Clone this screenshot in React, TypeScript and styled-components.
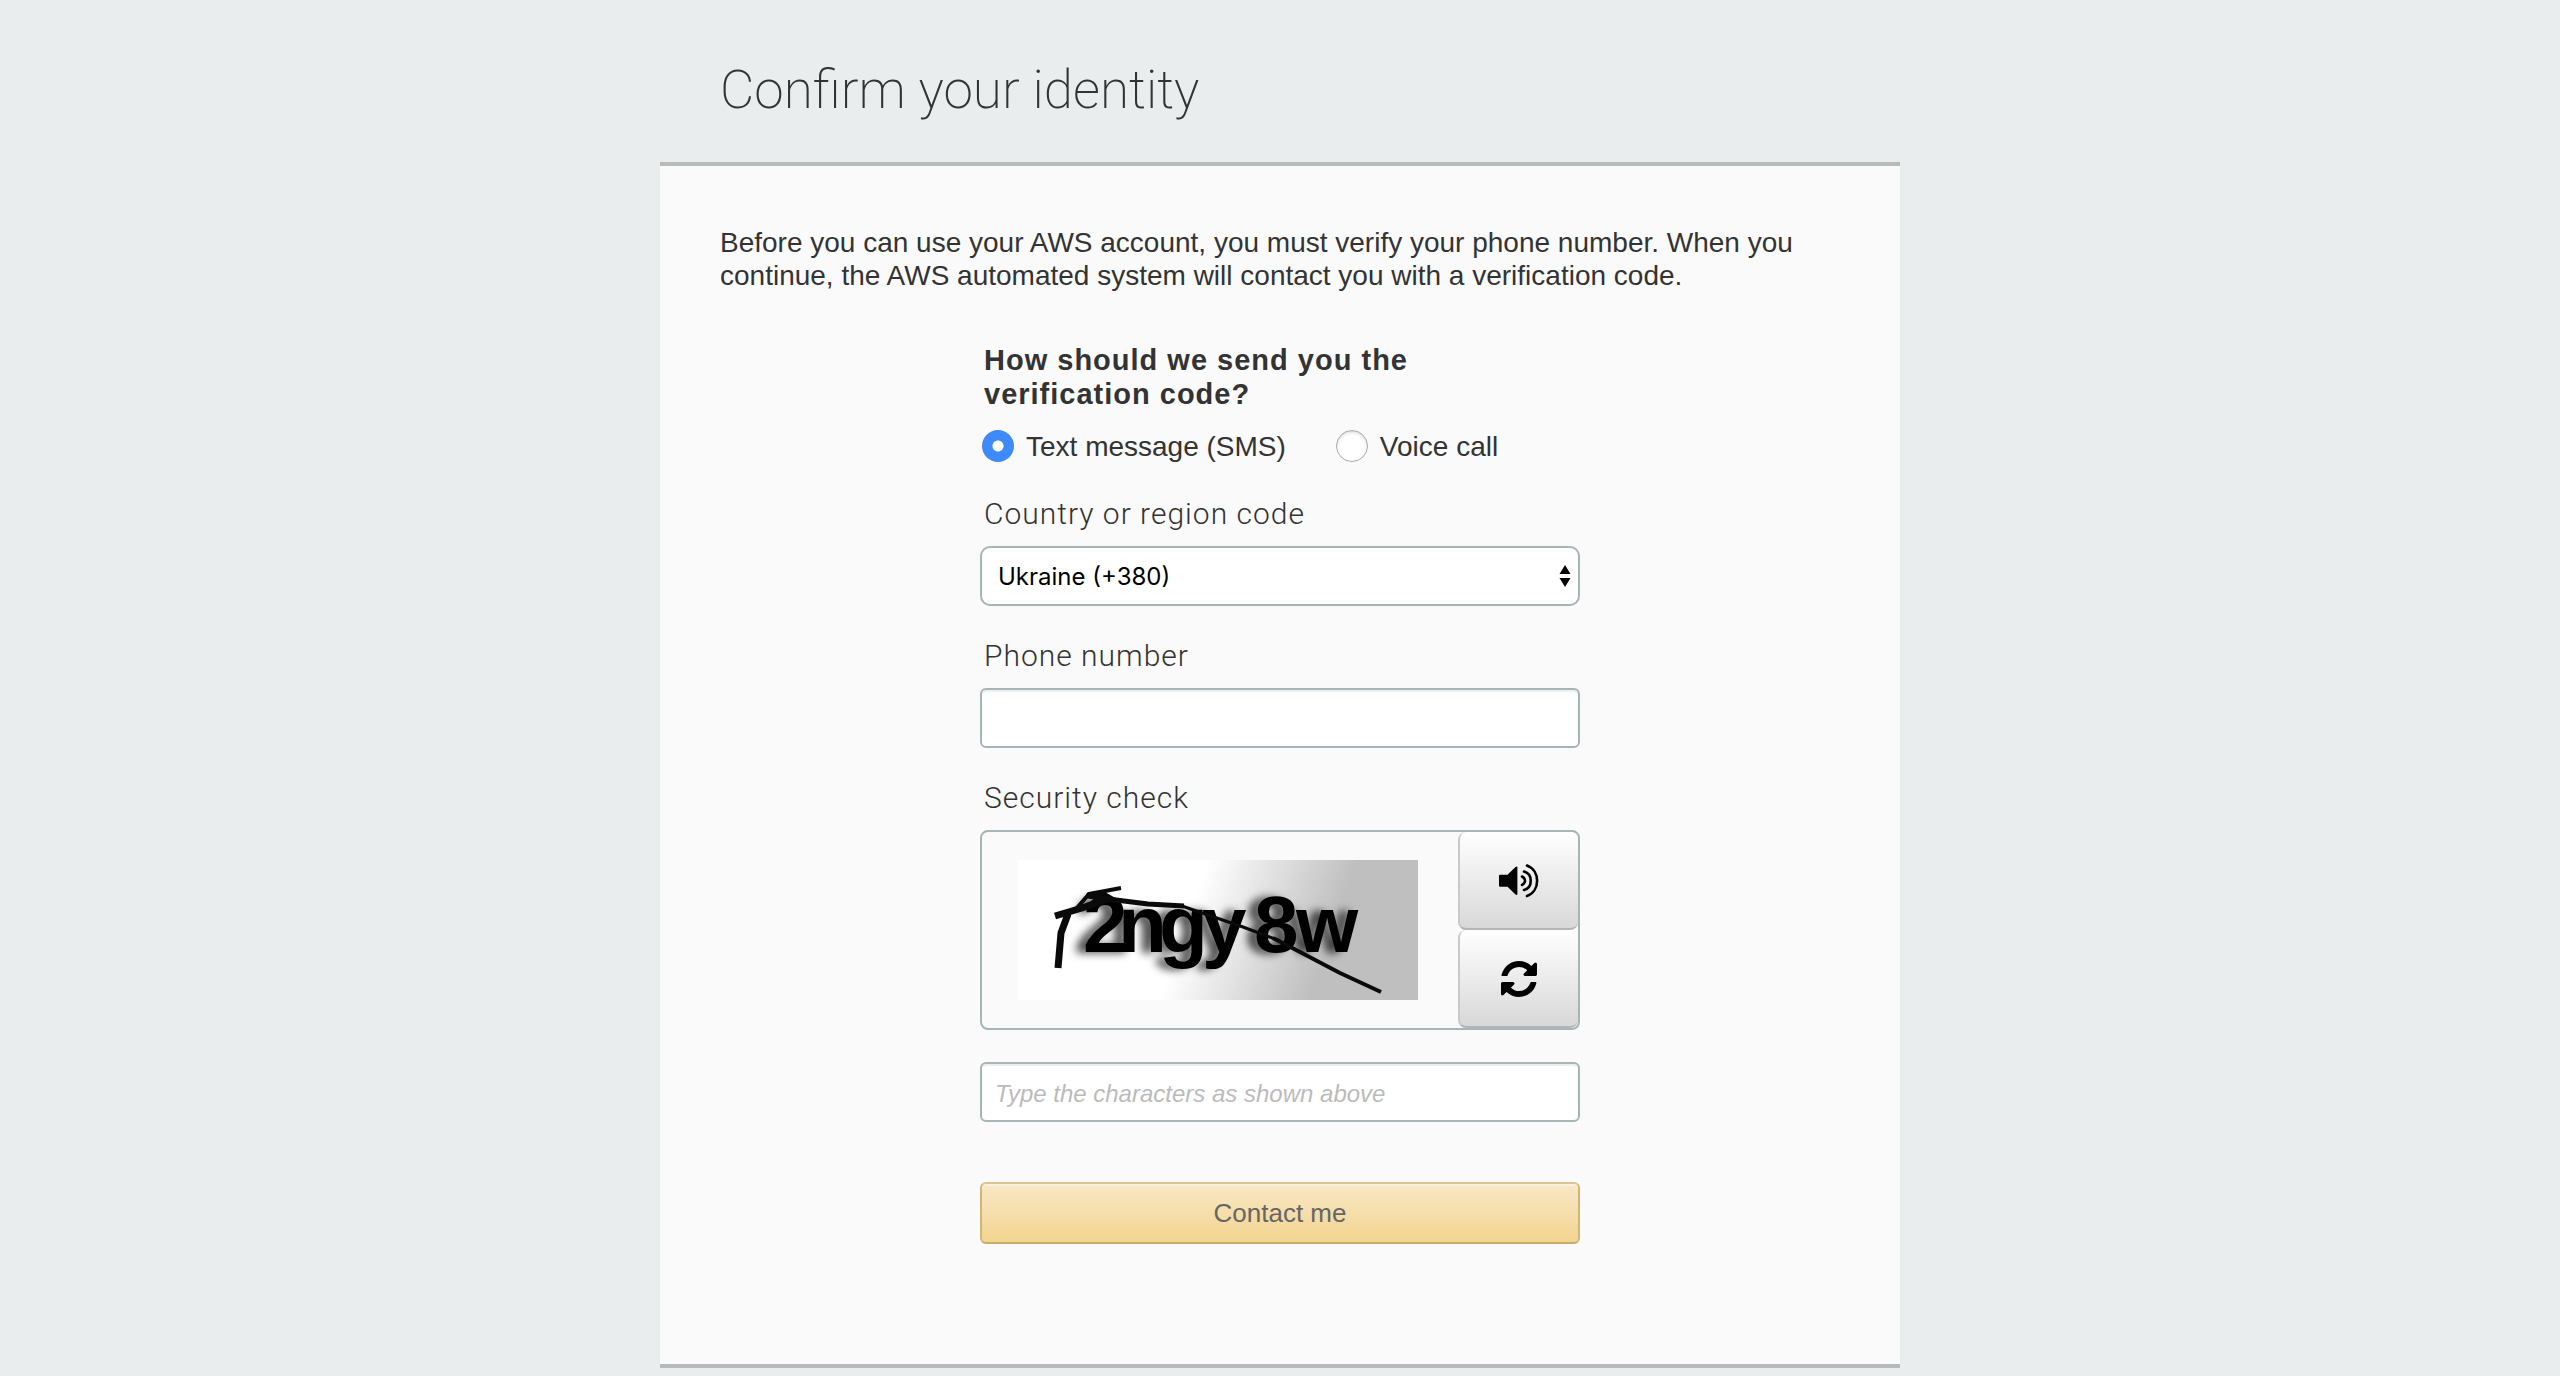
import React, { useState } from "react";
import styled, { createGlobalStyle } from "styled-components";

const sans = `"Liberation Sans", Arial, sans-serif`;
const light = `Roboto, "Liberation Sans", sans-serif`;

const GlobalStyle = createGlobalStyle`
  *, *::before, *::after { box-sizing: border-box; }
  body { margin: 0; background: #e9eded; color: #333; font-family: ${sans}; }
`;

const Page = styled.main`
  width: 100%;
  max-width: 1240px;
  margin: 0 auto;
  padding-bottom: 8px;
`;

const Title = styled.h1`
  margin: 0;
  padding: 58px 60px 40px;
  font-family: ${light};
  font-size: 53px;
  line-height: 64px;
  font-weight: 200;
`;

const Card = styled.section`
  padding: 60px 60px 120px;
  background: #fafafa;
  border-top: 4px solid #bababa;
  border-bottom: 4px solid #bababa;
`;

const Intro = styled.p`
  margin: 0;
  font-size: 28px;
  line-height: 33px;
`;

const Form = styled.form`
  width: 100%;
  max-width: 600px;
  margin: 51px auto 0;
  display: flex;
  flex-direction: column;
`;

const Choices = styled.fieldset`
  margin: 0;
  padding: 0;
  border: 0;
  min-width: 0;
`;

const Question = styled.legend`
  max-width: 480px;
  padding: 0 4px;
  font-size: 29px;
  line-height: 34px;
  font-weight: 700;
  letter-spacing: 1px;
`;

const RadioRow = styled.div`
  display: flex;
  gap: 50px;
  padding: 19px 2px 0;
`;

const RadioLabel = styled.label`
  display: flex;
  align-items: flex-start;
  gap: 12px;
  font-size: 28px;
  line-height: 34px;
`;

const Radio = styled.input`
  appearance: none;
  width: 32px;
  height: 32px;
  margin: 0;
  border-radius: 50%;
  background: #fff;
  border: 1px solid #aaa;
  box-shadow: inset 0 2px 3px #ddd;

  &:checked {
    border: 0;
    background: radial-gradient(circle, #fff 5px, #3f8afb 6px);
    box-shadow: none;
  }
`;

const Field = styled.div`
  display: flex;
  flex-direction: column;
  margin-top: 32px;
`;

const Label = styled.label`
  padding: 0 4px;
  margin-bottom: 14px;
  font-family: ${light};
  font-size: 30px;
  line-height: 36px;
  font-weight: 300;
  letter-spacing: 1px;
`;

const TextInput = styled.input`
  width: 100%;
  height: 60px;
  padding: 4px 13px 0;
  border: 2px solid #a6b5b5;
  border-radius: 6px;
  background: #fff;
  box-shadow: inset 0 2px 0 #eee;
  color: #111;
  font-family: ${sans};
  font-size: 24px;

  &::placeholder { color: #bbb; font-style: italic; opacity: 1; }
`;

const SelectWrap = styled.div`
  position: relative;
`;

const Select = styled.select`
  appearance: none;
  display: block;
  width: 100%;
  height: 60px;
  padding: 0 40px 0 16px;
  border: 2px solid #a6b5b5;
  border-radius: 10px;
  background: #fff;
  color: #000;
  font-family: Inter, ${sans};
  font-size: 24px;
`;

const SelectArrows = styled.svg`
  position: absolute;
  right: 9px;
  top: 19px;
  width: 12px;
  height: 22px;
  pointer-events: none;
`;

const CaptchaBox = styled.div`
  display: flex;
  height: 200px;
  border: 2px solid #a6b5b5;
  border-radius: 8px;
  justify-content: space-between;
`;

const CaptchaPicture = styled.svg`
  display: block;
  width: 400px;
  height: 140px;
  margin: 28px 0 0 36px;
`;

const CaptchaActions = styled.div`
  width: 120px;
  display: flex;
  flex-direction: column;
`;

const IconButton = styled.button`
  flex: 1;
  display: flex;
  align-items: center;
  justify-content: center;
  padding: 2px 0 0;
  border: solid #c9c9c9;
  border-width: 0 0 2px 2px;
  border-bottom-color: #b4b4b4;
  border-radius: 8px;
  background: linear-gradient(#fff, #d8d8d8);
  color: #000;
`;

const Answer = styled.div`
  margin-top: 32px;
`;

const Submit = styled.button`
  height: 62px;
  margin-top: 60px;
  border: 2px solid #d2b677;
  border-top-color: #dcc492;
  border-bottom-color: #c8ac6e;
  border-radius: 6px;
  background: linear-gradient(#f8e8c6, #f3d48f);
  box-shadow: inset 0 2px 0 #faefd7;
  color: #666;
  font-family: ${sans};
  font-size: 26px;
`;

function Captcha() {
  return (
    <CaptchaPicture viewBox="0 0 400 140" role="img" aria-label="Security check characters">
      <defs>
        <linearGradient id="fade" gradientUnits="userSpaceOnUse" x1="190" y1="0" x2="323" y2="47">
          <stop offset="0" stopColor="#fff" />
          <stop offset="1" stopColor="#bfbfbf" />
        </linearGradient>
        <filter id="shade" x="-10%" y="-20%" width="120%" height="140%">
          <feDropShadow dx="-9" dy="1" stdDeviation="4" floodColor="#000" floodOpacity="0.7" />
        </filter>
      </defs>
      <rect width="400" height="140" fill="url(#fade)" />
      <text
        x="65 100 141 184 236 278"
        y="92"
        fontFamily="'Liberation Sans', Arial, sans-serif"
        fontWeight="700"
        fontSize="80"
        filter="url(#shade)"
      >
        2ngy8w
      </text>
      <g fill="none" stroke="#0a0a0a" strokeLinejoin="round">
        <path d="M40 108L43 73L50 54" strokeWidth="7" />
        <path d="M37 56L64 48L93 38" strokeWidth="7" />
        <path d="M58 49L71 34L103 28" strokeWidth="4" />
        <path d="M70 34L84 32L98 40L84 42Z" fill="#0a0a0a" strokeWidth="3" />
        <path d="M70 36L98 40L130 44L166 46" strokeWidth="5" />
        <path d="M164 46L190 55L225 67L262 81" strokeWidth="3" />
        <path d="M255 78L282 92L322 113L363 132" strokeWidth="4" />
      </g>
    </CaptchaPicture>
  );
}

function SpeakerIcon() {
  return (
    <svg width="40" height="34" viewBox="0 0 40 34" aria-hidden="true">
      <path d="M1 10.700H8.500L16.500 3Q18.400 1.700 18.400 3.500V30Q18.400 31.700 16.500 30.500L8.500 22.700H1Q0 22.700 0 21.700V11.700Q0 10.700 1 10.700Z" fill="currentColor" />
      <g fill="none" stroke="currentColor" strokeWidth="2.600" strokeLinecap="round">
        <path d="M23 12.500Q26 14 26 16.700T23 21" />
        <path d="M25 7.500C34 10 34 23.500 25 26" />
        <path d="M28 1.500C41.500 6.500 41.500 27 28 32" />
      </g>
    </svg>
  );
}

function RefreshIcon() {
  return (
    <svg width="36" height="36" viewBox="0 128 1536 1536" fill="currentColor" aria-hidden="true">
      <path d="M1511 1056q0 5-1 7-64 268-268 434.500t-478 166.500q-146 0-282.500-55t-243.500-157l-129 129q-19 19-45 19t-45-19-19-45v-448q0-26 19-45t45-19h448q26 0 45 19t19 45-19 45l-137 137q71 66 161 102t187 36q134 0 250-65t186-179q11-17 53-117 8-23 30-23h192q13 0 22.500 9.500t9.500 22.500zm25-800v448q0 26-19 45t-45 19h-448q-26 0-45-19t-19-45 19-45l138-138q-148-137-349-137-134 0-250 65t-186 179q-11 17-53 117-8 23-30 23h-199q-13 0-22.500-9.500t-9.500-22.500v-7q65-268 270-434.500t480-166.500q146 0 284 55.500t245 156.500l130-129q19-19 45-19t45 19 19 45z" />
    </svg>
  );
}

export default function App() {
  const [channel, setChannel] = useState("sms");
  return (
    <>
      <GlobalStyle />
      <Page>
        <Title>Confirm your identity</Title>
        <Card>
          <Intro>
            Before you can use your AWS account, you must verify your phone number. When you
            continue, the AWS automated system will contact you with a verification code.
          </Intro>
          <Form onSubmit={(e) => e.preventDefault()}>
            <Choices>
              <Question>How should we send you the verification code?</Question>
              <RadioRow>
                <RadioLabel htmlFor="sms">
                  <Radio id="sms" type="radio" name="channel" checked={channel === "sms"} onChange={() => setChannel("sms")} />
                  Text message (SMS)
                </RadioLabel>
                <RadioLabel htmlFor="voice">
                  <Radio id="voice" type="radio" name="channel" checked={channel === "voice"} onChange={() => setChannel("voice")} />
                  Voice call
                </RadioLabel>
              </RadioRow>
            </Choices>
            <Field>
              <Label htmlFor="country">Country or region code</Label>
              <SelectWrap>
                <Select id="country" defaultValue="UA">
                  <option value="UA">Ukraine (+380)</option>
                </Select>
                <SelectArrows viewBox="0 0 12 22" aria-hidden="true">
                  <path d="M6 0L11.500 9H0.500ZM0.500 13H11.500L6 22Z" />
                </SelectArrows>
              </SelectWrap>
            </Field>
            <Field>
              <Label htmlFor="phone">Phone number</Label>
              <TextInput id="phone" type="tel" />
            </Field>
            <Field>
              <Label htmlFor="answer">Security check</Label>
              <CaptchaBox>
                <Captcha />
                <CaptchaActions>
                  <IconButton type="button" aria-label="Play audio"><SpeakerIcon /></IconButton>
                  <IconButton type="button" aria-label="Refresh image"><RefreshIcon /></IconButton>
                </CaptchaActions>
              </CaptchaBox>
            </Field>
            <Answer>
              <TextInput id="answer" type="text" placeholder="Type the characters as shown above" />
            </Answer>
            <Submit type="submit">Contact me</Submit>
          </Form>
        </Card>
      </Page>
    </>
  );
}
